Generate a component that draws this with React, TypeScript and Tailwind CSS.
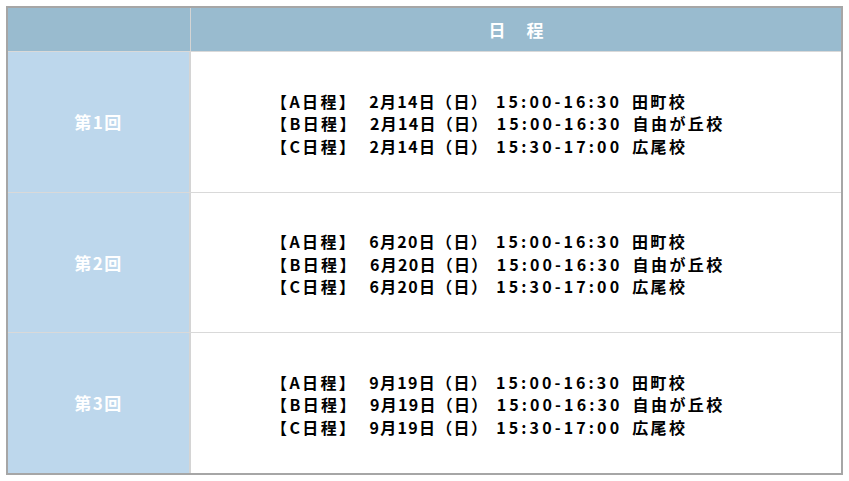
import React from "react";

type Line = [string, string, string, string];

type Round = {
  label: string;
  lines: Line[];
};

const rounds: Round[] = [
  {
    label: "第1回",
    lines: [
      ["【A日程】", "2月14日（日）", "15:00-16:30", "田町校"],
      ["【B日程】", "2月14日（日）", "15:00-16:30", "自由が丘校"],
      ["【C日程】", "2月14日（日）", "15:30-17:00", "広尾校"],
    ],
  },
  {
    label: "第2回",
    lines: [
      ["【A日程】", "6月20日（日）", "15:00-16:30", "田町校"],
      ["【B日程】", "6月20日（日）", "15:00-16:30", "自由が丘校"],
      ["【C日程】", "6月20日（日）", "15:30-17:00", "広尾校"],
    ],
  },
  {
    label: "第3回",
    lines: [
      ["【A日程】", "9月19日（日）", "15:00-16:30", "田町校"],
      ["【B日程】", "9月19日（日）", "15:00-16:30", "自由が丘校"],
      ["【C日程】", "9月19日（日）", "15:30-17:00", "広尾校"],
    ],
  },
];

const font = {
  fontFamily: '"Noto Sans CJK JP", "Noto Sans", sans-serif',
};

const App: React.FC = () => {
  return (
    <div className="w-[849px] h-[481px] bg-white p-[6px]" style={font}>
      <div className="w-[837px] h-[469px] border-2 border-[#a6a6a6] flex flex-col">
        <div className="flex h-[44px] bg-[#99bbcf] border-b border-[#d9d9d9]">
          <div className="w-[183px] border-r border-[#d4d4d4]" />
          <div className="flex-1 flex items-center justify-center text-white font-bold text-[17px] tracking-[0.5em] pl-[0.5em]">
            日 程
          </div>
        </div>
        {rounds.map((r, i) => (
          <div
            key={r.label}
            className={`flex flex-1 ${i < rounds.length - 1 ? "border-b border-[#d9d9d9]" : ""}`}
          >
            <div className="w-[183px] bg-[#bdd7ec] border-r-2 border-[#d4d4d4] flex items-center justify-center text-white font-bold text-[17px] tracking-[1.5px]">
              {r.label}
            </div>
            <div className="flex-1 flex flex-col justify-center pl-[80px] pt-[3px]">
              {r.lines.map(([tag, date, time, place]) => (
                <div
                  key={tag + date}
                  className="whitespace-pre text-black font-bold text-[16px] leading-[22.5px] tracking-[2.4px]"
                >
                  <span>{tag}</span>
                  <span className="ml-[12px] tracking-[1.3px]">{date}</span>
                  <span className="ml-[8px] tracking-[3.1px]">{time}</span>
                  <span className="ml-[10px]">{place}</span>
                </div>
              ))}
            </div>
          </div>
        ))}
      </div>
    </div>
  );
};

export default App;
